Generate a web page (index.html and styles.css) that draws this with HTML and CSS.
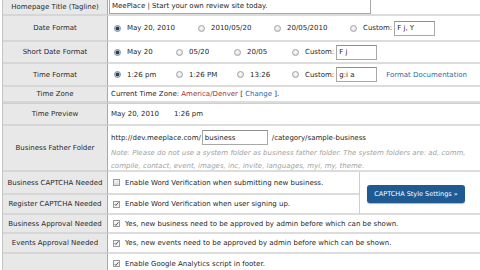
FILE: index.html
```html
<!DOCTYPE html>
<html>
<head>
<meta charset="utf-8">
<link rel="stylesheet" href="styles.css">
</head>
<body>
<div class="form">
  <div class="lbl r1">Homepage Title (Tagline)</div>
  <div class="val span2"><span class="input title-input">MeePlace | Start your own review site today.</span></div>

  <div class="lbl r2">Date Format</div>
  <div class="val span2 opts">
    <span class="opt d1"><span class="radio on"></span>May 20, 2010</span>
    <span class="opt d2"><span class="radio"></span>2010/05/20</span>
    <span class="opt d3"><span class="radio"></span>20/05/2010</span>
    <span class="opt"><span class="radio"></span>Custom:<span class="input small">F j, Y</span></span>
  </div>

  <div class="lbl r3">Short Date Format</div>
  <div class="val span2 opts">
    <span class="opt s1"><span class="radio on"></span>May 20</span>
    <span class="opt s2"><span class="radio"></span>05/20</span>
    <span class="opt s3"><span class="radio"></span>20/05</span>
    <span class="opt"><span class="radio"></span>Custom:<span class="input small">F j</span></span>
  </div>

  <div class="lbl r4">Time Format</div>
  <div class="val span2 opts">
    <span class="opt s1"><span class="radio on"></span>1:26 pm</span>
    <span class="opt t2"><span class="radio"></span>1:26 PM</span>
    <span class="opt t3"><span class="radio"></span>13:26</span>
    <span class="opt"><span class="radio"></span>Custom:<span class="input small">g:i a</span></span>
    <span class="link doc">Format Documentation</span>
  </div>

  <div class="lbl r5">Time Zone</div>
  <div class="val span2 text"><span>Current Time Zone: <span class="tz">America/Denver</span> [ <span class="link">Change</span> ].</span></div>

  <div class="lbl r6 thick">Time Preview</div>
  <div class="val span2 text thick"><span>May 20, 2010</span><span class="gap"></span><span>1:26 pm</span></div>

  <div class="lbl r7">Business Father Folder</div>
  <div class="val span2 folder">
    <div class="folder-line"><span>http://dev.meeplace.com/</span><span class="input biz">business</span><span>/category/sample-business</span></div>
    <div class="note">Note: Please do not use a system folder as business father folder. The system folders are: ad, comm,<br>compile, contact, event, images, inc, invite, languages, myi, my, theme.</div>
  </div>

  <div class="lbl r8">Business CAPTCHA Needed</div>
  <div class="val text"><span class="check"></span><span>Enable Word Verification when submitting new business.</span></div>
  <div class="btn-cell"><span class="btn">CAPTCHA Style Settings »</span></div>

  <div class="lbl r9">Register CAPTCHA Needed</div>
  <div class="val text"><span class="check on"><svg viewBox="0 0 8 8" width="6" height="6"><path d="M1 4.2 L3 6.3 L7 1.3" fill="none" stroke="#333" stroke-width="1.3"/></svg></span><span>Enable Word Verification when user signing up.</span></div>

  <div class="lbl r10">Business Approval Needed</div>
  <div class="val span2 text"><span class="check on"><svg viewBox="0 0 8 8" width="6" height="6"><path d="M1 4.2 L3 6.3 L7 1.3" fill="none" stroke="#333" stroke-width="1.3"/></svg></span><span>Yes, new business need to be approved by admin before which can be shown.</span></div>

  <div class="lbl r11">Events Approval Needed</div>
  <div class="val span2 text"><span class="check on"><svg viewBox="0 0 8 8" width="6" height="6"><path d="M1 4.2 L3 6.3 L7 1.3" fill="none" stroke="#333" stroke-width="1.3"/></svg></span><span>Yes, new events need to be approved by admin before which can be shown.</span></div>

  <div class="lbl r12"></div>
  <div class="val span2 text last"><span class="check on"><svg viewBox="0 0 8 8" width="6" height="6"><path d="M1 4.2 L3 6.3 L7 1.3" fill="none" stroke="#333" stroke-width="1.3"/></svg></span><span>Enable Google Analytics script in footer.</span></div>
</div>
</body>
</html>
```

FILE: styles.css
```css
html, body {
  margin: 0;
  padding: 0;
  background: #fff;
  overflow: hidden;
}
body {
  width: 480px;
  height: 270px;
  font-family: "DejaVu Sans", Verdana, sans-serif;
  font-size: 7px;
  color: #262626;
}
.form {
  margin-left: 2px;
  width: 500px;
  display: grid;
  grid-template-columns: 105px 251px 1fr;
  grid-template-rows: 16px 26px 22px 23px 16px 23px 46px 23px 20px 19px 20px 16px;
  border-left: 1px solid #c4c4c4;
}
.lbl {
  grid-column: 1;
  background: #e8e8e8;
  border-right: 1px solid #a9a9a9;
  border-bottom: 2px solid #d6d6d6;
  box-sizing: border-box;
  display: flex;
  align-items: center;
  justify-content: center;
  color: #2a2a2a;
  white-space: nowrap;
}
.r12 { border-bottom: none; }
.val {
  border-bottom: 2px solid #dcdcdc;
  box-sizing: border-box;
  display: flex;
  align-items: center;
  padding-left: 4px;
  white-space: nowrap;
  overflow: hidden;
}
.val.last {
  border-bottom: none;
  padding-top: 3px;
}
.span2 { grid-column: 2 / 4; }
.thick { border-top: 1px solid #cfcfcf; }
.input {
  display: inline-flex;
  align-items: center;
  box-sizing: border-box;
  border: 1px solid #a8a8a8;
  border-top-color: #8e8e8e;
  background: #fff;
  padding-left: 2px;
  height: 15px;
  color: #222;
}
.title-input {
  width: 262px;
  margin-left: -3px;
  margin-top: -2px;
}
.opts { padding-left: 6px; }
.opt {
  display: inline-flex;
  align-items: center;
}
.radio {
  display: inline-block;
  width: 7px;
  height: 7px;
  box-sizing: border-box;
  border-radius: 50%;
  border: 1px solid #a3a3a3;
  background: radial-gradient(circle at 50% 40%, #ffffff, #d4d4d4);
  margin-right: 6px;
  flex: none;
}
.radio.on {
  border-color: #7d8a96;
  background: radial-gradient(circle, #24425f 0 1.6px, #c9d3dc 2.2px);
}
.d1 { width: 84px; }
.d2 { width: 76px; }
.d3 { width: 76px; }
.s1 { width: 62px; }
.s2 { width: 58px; }
.s3 { width: 58px; }
.t2 { width: 61px; }
.t3 { width: 55px; }
.small {
  width: 41px;
  margin-left: 2px;
}
.doc { margin-left: 9px; }
.link { color: #2d6aa3; }
.tz { color: #a0323a; }
.text { padding-left: 3px; }
.gap { display: inline-block; width: 15px; }
.folder {
  flex-direction: column;
  align-items: flex-start;
  justify-content: flex-start;
  padding-left: 3px;
  padding-top: 4px;
}
.folder-line {
  display: flex;
  align-items: center;
  height: 15px;
}
.biz {
  width: 66px;
  margin: 0 4px 0 1px;
}
.note {
  color: #a2a2a2;
  font-style: italic;
  line-height: 13px;
  margin-top: 2px;
}
.check {
  display: inline-flex;
  align-items: center;
  justify-content: center;
  width: 7px;
  height: 7px;
  box-sizing: border-box;
  border: 1px solid #9b9b9b;
  background: linear-gradient(#f4f4f4, #d9d9d9);
  margin: 0 5px 0 2px;
  flex: none;
}
.check.on { background: #f4f4f4; }
.btn-cell {
  grid-column: 3;
  grid-row: 8 / 10;
  border-left: 1px solid #cfcfcf;
  border-bottom: 2px solid #dcdcdc;
  box-sizing: border-box;
  display: flex;
  align-items: center;
  padding-left: 7px;
  padding-top: 3px;
}
.btn {
  display: inline-flex;
  align-items: center;
  justify-content: center;
  width: 98px;
  height: 18px;
  background: #1f5b92;
  border-radius: 3px;
  color: #fff;
  font-size: 6.5px;
  box-shadow: 0 1px 1px rgba(0,0,0,0.3);
}
```
